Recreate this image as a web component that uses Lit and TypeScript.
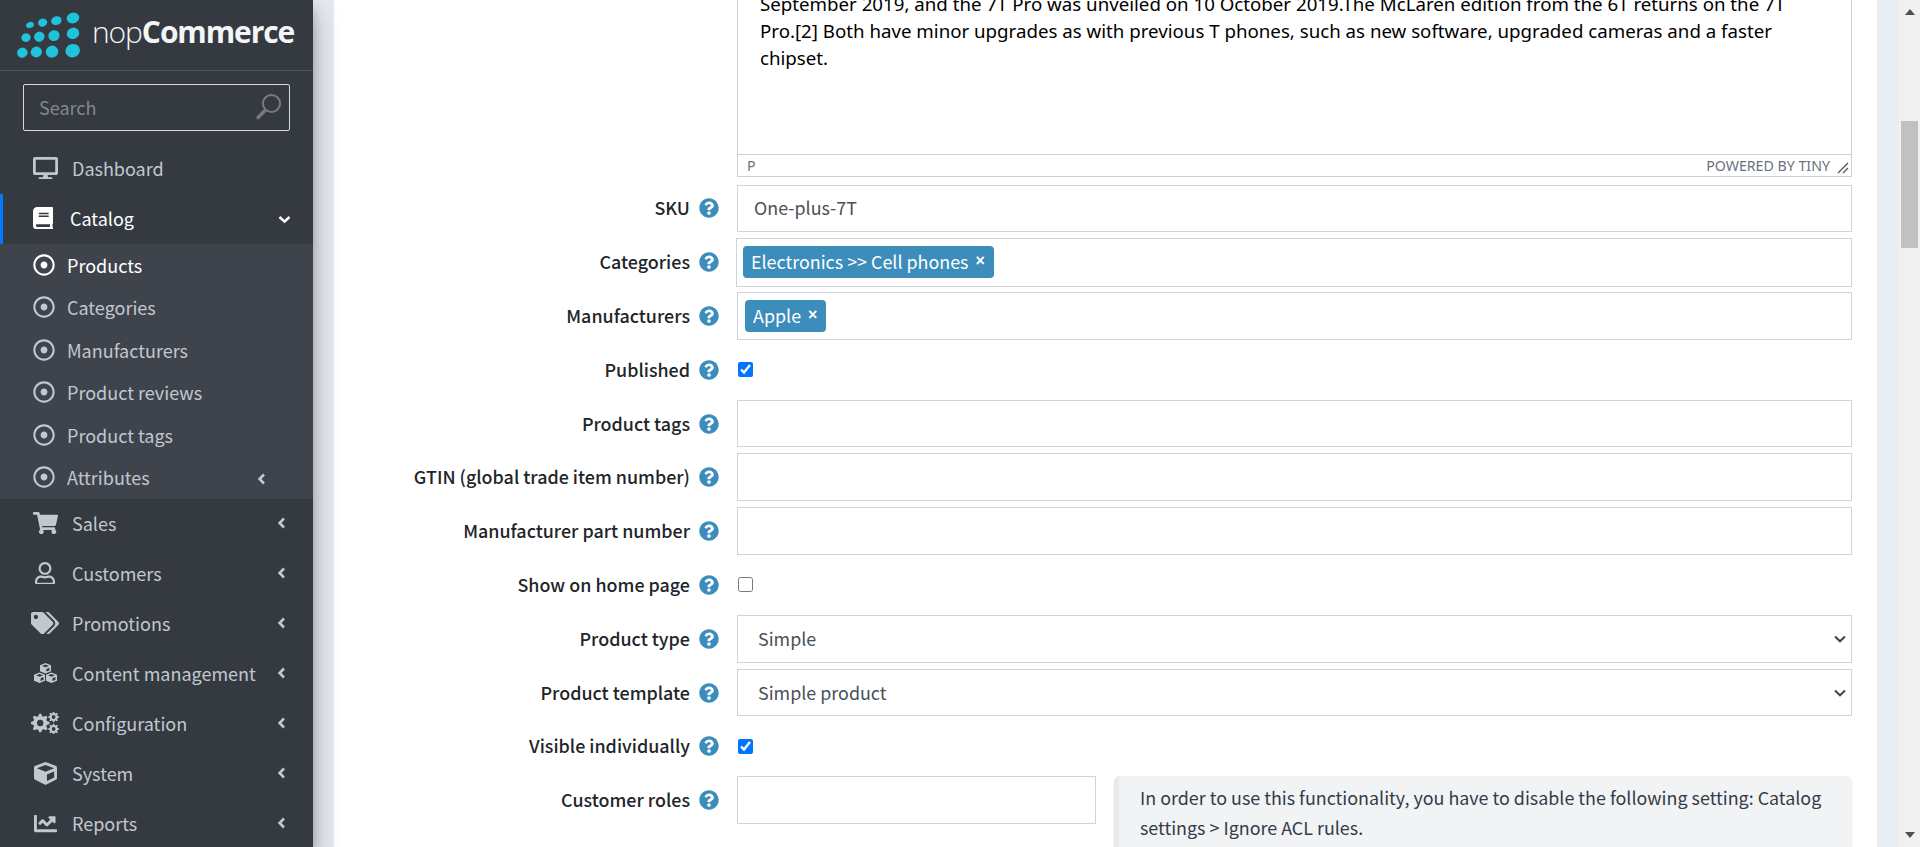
import { LitElement, html, css, svg } from "lit";
import { customElement } from "lit/decorators.js";

const P = {
  desktop: ["0 0 576 512", "M528 0H48C21.5 0 0 21.5 0 48v320c0 26.5 21.5 48 48 48h192l-16 48h-72c-13.3 0-24 10.7-24 24s10.7 24 24 24h272c13.3 0 24-10.7 24-24s-10.7-24-24-24h-72l-16-48h192c26.5 0 48-21.5 48-48V48c0-26.5-21.5-48-48-48zm-16 352H64V64h448v288z"],
  book: ["0 0 448 512", "M448 360V24c0-13.3-10.7-24-24-24H96C43 0 0 43 0 96v320c0 53 43 96 96 96h328c13.3 0 24-10.7 24-24v-16c0-7.5-3.5-14.3-8.9-18.7-4.2-15.4-4.2-59.3 0-74.7 5.4-4.3 8.9-11.1 8.9-18.6zM128 134c0-3.3 2.7-6 6-6h212c3.3 0 6 2.7 6 6v20c0 3.3-2.7 6-6 6H134c-3.3 0-6-2.7-6-6v-20zm0 64c0-3.3 2.7-6 6-6h212c3.3 0 6 2.7 6 6v20c0 3.3-2.7 6-6 6H134c-3.3 0-6-2.7-6-6v-20zm253.4 250H96c-17.7 0-32-14.3-32-32 0-17.6 14.4-32 32-32h285.4c-1.9 17.1-1.9 46.9 0 64z"],
  cart: ["0 0 576 512", "M528.12 301.319l47.273-208C578.806 78.301 567.391 64 551.99 64H159.208l-9.166-44.81C147.758 8.021 137.93 0 126.529 0H24C10.745 0 0 10.745 0 24v16c0 13.255 10.745 24 24 24h69.883l70.248 343.435C147.325 417.1 136 435.222 136 456c0 30.928 25.072 56 56 56s56-25.072 56-56c0-15.674-6.447-29.835-16.824-40h209.647C430.447 426.165 424 440.326 424 456c0 30.928 25.072 56 56 56s56-25.072 56-56c0-22.172-12.888-41.332-31.579-50.405l5.517-24.276c3.413-15.018-8.002-29.319-23.403-29.319H218.117l-6.545-32h293.145c11.206 0 20.92-7.754 23.403-18.681z"],
  user: ["0 0 448 512", "M313.6 304c-28.7 0-42.5 16-89.6 16-47.1 0-60.8-16-89.6-16C60.2 304 0 364.2 0 438.4V464c0 26.5 21.5 48 48 48h352c26.5 0 48-21.5 48-48v-25.6c0-74.2-60.2-134.4-134.4-134.4zM400 464H48v-25.6c0-47.6 38.8-86.4 86.4-86.4 14.6 0 38.3 16 89.6 16 51.7 0 74.9-16 89.6-16 47.6 0 86.4 38.8 86.4 86.4V464zM224 288c79.5 0 144-64.5 144-144S303.5 0 224 0 80 64.5 80 144s64.5 144 144 144zm0-240c52.9 0 96 43.1 96 96s-43.1 96-96 96-96-43.1-96-96 43.1-96 96-96z"],
  tags: ["0 0 640 512", "M497.941 225.941L286.059 14.059A48 48 0 0 0 252.118 0H48C21.49 0 0 21.49 0 48v204.118a48 48 0 0 0 14.059 33.941l211.882 211.882c18.744 18.745 49.136 18.746 67.882 0l204.118-204.118c18.745-18.745 18.745-49.137 0-67.882zM112 160c-26.51 0-48-21.49-48-48s21.49-48 48-48 48 21.49 48 48-21.49 48-48 48zm513.941 133.823L421.823 497.941c-18.745 18.745-49.137 18.745-67.882 0l-.36-.36L527.64 323.522c16.999-16.999 26.36-39.6 26.36-63.64s-9.362-46.641-26.36-63.64L331.397 0h48.721a48 48 0 0 1 33.941 14.059l211.882 211.882c18.745 18.745 18.745 49.137 0 67.882z"],
  cube: ["0 0 512 512", "M239.1 6.3l-208 78c-18.7 7-31.1 25-31.1 45v225.1c0 18.2 10.3 34.8 26.5 42.9l208 104c13.5 6.8 29.4 6.8 42.9 0l208-104c16.3-8.1 26.5-24.8 26.5-42.9V129.3c0-20-12.4-37.9-31.1-44.9l-208-78C262 2.2 250 2.2 239.1 6.3zM256 68.4l192 72v1.1l-192 78-192-78v-1.1l192-72zm32 356V275.5l160-65v133.9l-160 80z"],
  chart: ["0 0 512 512", "M496 384H64V80c0-8.84-7.16-16-16-16H16C7.16 64 0 71.16 0 80v336c0 17.67 14.33 32 32 32h464c8.84 0 16-7.16 16-16v-32c0-8.84-7.16-16-16-16zM464 96H345.94c-21.38 0-32.09 25.85-16.97 40.97l32.4 32.4L288 242.75l-73.37-73.37c-12.5-12.5-32.76-12.5-45.25 0l-68.69 68.69c-6.25 6.25-6.25 16.38 0 22.63l22.62 22.62c6.25 6.25 16.38 6.25 22.63 0L192 237.25l73.37 73.37c12.5 12.5 32.76 12.5 45.25 0l96-96 32.4 32.4c15.12 15.12 40.97 4.41 40.97-16.97V112c.01-8.84-7.15-16-15.99-16z"],
  help: ["0 0 512 512", "M504 256c0 136.997-111.043 248-248 248S8 392.997 8 256C8 119.083 119.043 8 256 8s248 111.083 248 248zM262.655 90c-54.497 0-89.255 22.957-116.549 63.758-3.536 5.286-2.353 12.415 2.715 16.258l34.699 26.31c5.205 3.947 12.621 3.008 16.665-2.122 17.864-22.658 30.113-35.797 57.303-35.797 20.429 0 45.698 13.148 45.698 32.958 0 14.976-12.363 22.667-32.534 33.976C247.128 238.528 216 254.941 216 296v4c0 6.627 5.373 12 12 12h56c6.627 0 12-5.373 12-12v-1.333c0-28.462 83.186-29.647 83.186-106.667 0-58.002-60.165-102-116.531-102zM256 338c-25.365 0-46 20.635-46 46 0 25.364 20.635 46 46 46s46-20.636 46-46c0-25.365-20.635-46-46-46z"],
  dot: ["0 0 512 512", "M256 56c110.532 0 200 89.451 200 200 0 110.532-89.451 200-200 200-110.532 0-200-89.451-200-200 0-110.532 89.451-200 200-200m0-48C119.033 8 8 119.033 8 256s111.033 248 248 248 248-111.033 248-248S392.967 8 256 8zm0 168c-44.183 0-80 35.817-80 80s35.817 80 80 80 80-35.817 80-80-35.817-80-80-80z"],
};
type IconName = keyof typeof P;

function gearPath(cx: number, cy: number, r: number, hole: number, teeth: number) {
  const pts: string[] = [];
  const n = teeth * 4;
  for (let i = 0; i < n; i++) {
    const a = (i / n) * Math.PI * 2 - Math.PI / teeth / 4;
    const rr = i % 4 < 2 ? r : r * 0.74;
    pts.push(`${(cx + rr * Math.cos(a)).toFixed(2)} ${(cy + rr * Math.sin(a)).toFixed(2)}`);
  }
  return `M${pts.join("L")}Z M${cx + hole} ${cy}a${hole} ${hole} 0 1 0 ${-2 * hole} 0a${hole} ${hole} 0 1 0 ${2 * hole} 0Z`;
}

const icon = (name: IconName, w: number) => html`<svg class="fa" width=${w} viewBox=${P[name][0]} fill="currentColor"><path fill-rule="evenodd" d=${P[name][1]}></path></svg>`;

const cogs = (w: number) => html`<svg class="fa" width=${w} viewBox="0 0 28 22" fill="currentColor">
  <path fill-rule="evenodd" d=${gearPath(9.2, 11, 9.4, 3.2, 8)}></path>
  <path fill-rule="evenodd" d=${gearPath(22.6, 5, 5.4, 1.9, 8)}></path>
  <path fill-rule="evenodd" d=${gearPath(22.6, 17, 5.4, 1.9, 8)}></path>
</svg>`;

const cubes = (w: number) => html`<svg class="fa" width=${w} viewBox="0 0 23 20" fill="currentColor">
  <path fill-rule="evenodd" d="M11.5 0 17 2.2v6l-5.5 2.2L6 8.2v-6zM8 2.9l3.5 1.4L15 2.9l-3.5-1.3zM12.4 5.9v2.7l3-1.2V4.7z"></path>
  <path fill-rule="evenodd" d="M5.6 9.6 11 11.7v6L5.6 19.9 0 17.7v-6zM2.2 12.3l3.4 1.4L9 12.3 5.6 11zM6.6 15.3V18l2.9-1.2v-2.7z"></path>
  <path fill-rule="evenodd" d="M17.4 9.6 23 11.7v6l-5.6 2.2-5.4-2.2v-6zM14 12.3l3.4 1.4 3.4-1.4-3.4-1.3zM18.4 15.3V18l3.1-1.2v-2.7z"></path>
</svg>`;

const chevL = html`<svg class="chev" width="9" height="12" viewBox="0 0 9 12" fill="none" stroke="currentColor" stroke-width="2.6"><path d="M7 1.5 2.6 6 7 10.5"></path></svg>`;
const chevD = html`<svg class="chev" width="13" height="9" viewBox="0 0 13 9" fill="none" stroke="currentColor" stroke-width="2.6"><path d="M1.5 2 6.5 6.6 11.5 2"></path></svg>`;

const DOTS: [number, number, number, number][] = [
  [48, 42, 12, 9], [86, 35, 14, 12], [127, 29, 16, 13], [177, 21, 19, 16],
  [36, 80, 14, 13], [76, 77, 16, 15], [120, 74, 17, 16], [177, 67, 19, 17],
  [25, 125, 16, 15], [67, 123, 17, 16], [114, 122, 19, 18], [176, 119, 22, 20],
];
const logoMark = html`<svg class="mark" width="72" height="56" viewBox="0 0 216 168" fill="#1fc3dc">
  ${DOTS.map(([x, y, rx, ry]) => svg`<ellipse cx=${x} cy=${y} rx=${rx} ry=${ry} transform="rotate(-18 ${x} ${y})"></ellipse>`)}
</svg>`;

const TOP: [string, any][] = [
  ["Sales", icon("cart", 25)],
  ["Customers", icon("user", 20)],
  ["Promotions", icon("tags", 28)],
  ["Content management", cubes(23)],
  ["Configuration", cogs(28)],
  ["System", icon("cube", 23)],
  ["Reports", icon("chart", 23)],
];
const SUB = ["Products", "Categories", "Manufacturers", "Product reviews", "Product tags", "Attributes"];

@customElement("app-root")
export class AppRoot extends LitElement {
  static styles = css`
    :host { display: flex; width: 1920px; height: 847px; overflow: hidden; background: #e9edf4;
      font-family: "Noto Sans CJK SC", "Source Sans Pro", "Noto Sans", sans-serif; font-size: 17.9px; color: #212529; }
    * { box-sizing: border-box; }
    .fa { display: block; flex: none; }
    .chev { display: block; flex: none; }

    aside { width: 313px; flex: none; background: #343a40; color: #c2c7d0; position: relative; z-index: 2;
      box-shadow: 0 14px 28px rgba(0,0,0,.25), 0 10px 10px rgba(0,0,0,.22); font-size: 18px; }
    .brand { height: 71px; border-bottom: 1px solid #4b545c; display: flex; align-items: center; padding: 0 0 0 14px; gap: 6px; }
    .mark { margin-top: 7px; flex: none; }
    .logo { font-family: "Open Sans", sans-serif; font-size: 30px; line-height: 40px; color: #f4f5f6; font-weight: 300; letter-spacing: -1.1px; white-space: nowrap; margin-top: -6px; }
    .logo b { font-weight: 700; }
    .search { height: 73px; padding: 13px 23px; }
    .search-box { height: 47px; border: 1px solid #d8dbde; border-radius: 2px; display: flex; align-items: center; justify-content: space-between; padding: 0 7px 2px 15px; }
    .search-box span { color: #83888d; font-size: 18px; }
    .search-box svg { display: block; }

    .item { height: 50px; display: flex; align-items: center; position: relative; white-space: nowrap; padding-bottom: 2px; }
    .ic { width: 26px; margin-left: 32px; margin-right: 14px; display: flex; justify-content: center; flex: none; }
    .item .chev { position: absolute; right: 27px; top: 18px; }
    .item.open { color: #fff; border-left: 3px solid #007bff; }
    .item.open .ic { width: 20px; margin-left: 30px; margin-right: 17px; }
    .item.open .chev { right: 22px; top: 21px; }
    .sub { background: #3f444c; height: 255px; }
    .sub div { height: 42.5px; display: flex; align-items: center; padding: 0 0 1px 33px; gap: 12px; position: relative; }
    .sub div.on { color: #fff; }
    .sub .chev { position: absolute; right: 47px; top: 16px; }

    .gut-l { width: 21px; flex: none; background: #e6e9ef; }
    main { width: 1543px; flex: none; background: #fff; height: 847px; overflow: hidden; padding-right: 25px; }
    .gut-r { width: 22px; flex: none; background: #e9edf4; }
    .bar { width: 21px; flex: none; background: #f1f1f1; display: flex; flex-direction: column; align-items: center; padding: 9px 0 9px; }
    .thumb { width: 17px; height: 127px; background: #c1c1c1; margin-top: 106px; }
    .bar svg { display: block; flex: none; }
    .bar .dn { margin-top: auto; }

    .row { display: grid; grid-template-columns: 403px 1fr; min-height: 47.8px; margin-bottom: 6px; align-items: center; }
    .row.top { align-items: start; }
    .label { display: flex; justify-content: flex-end; align-items: center; gap: 9px; padding-right: 18px; font-weight: 500; white-space: nowrap; color: #212529; line-height: 24px; }
    .label span { margin-top: -2px; }
    .row.top .label { height: 47.8px; }
    .label .fa { color: #3c8dbc; }

    .editor-row { display: grid; grid-template-columns: 403px 1fr; margin-bottom: 7.5px; }
    .editor { grid-column: 2; height: 177px; border: solid #ccd0d6; border-width: 0 1px 1px 1px; display: flex; flex-direction: column; overflow: hidden; }
    .doc { flex: 1; padding-left: 22px; overflow: hidden; color: #000; font-family: "Noto Sans", "Open Sans", sans-serif; font-size: 18.7px; line-height: 27px; white-space: nowrap; }
    .doc p { margin: -10.5px 0 0; }
    .status { height: 22px; flex: none; border-top: 1px solid #ccd0d6; display: flex; align-items: center; justify-content: space-between; color: #6a7280; padding: 0 2px 0 9px; font-family: "Noto Sans", "Open Sans", sans-serif; font-size: 14.2px; }
    .status div { display: flex; align-items: center; gap: 7px; }
    .status svg { display: block; margin-top: 4px; }

    .ctl { border: 1px solid #ced4da; height: 47.8px; display: flex; align-items: center; padding: 0 16px 2px; color: #495057; line-height: 24px; background: #fff; width: 100%; font: inherit; border-radius: 0; }
    .tags { height: 49px; margin: -1px 0 -1px -1px; width: calc(100% + 1px); padding: 0 6px; }
    .tags2 { height: 48px; margin: -1px 0; padding: 0 7px; }
    .tag { background: #3c8dbc; color: #fff; height: 32px; border-radius: 4px; display: flex; align-items: center; padding: 0 9px 2px 8px; white-space: nowrap; gap: 7px; }
    .tag b { font-family: "Liberation Sans", sans-serif; font-weight: 700; font-size: 16px; }
    .sel-wrap { position: relative; }
    select.ctl { appearance: none; -webkit-appearance: none; padding: 0 0 2px 20px; outline: 0; font-family: inherit; font-size: 17.9px; color: #495057; }
    .sel-wrap svg { position: absolute; right: 6px; top: 20px; display: block; }
    input[type="checkbox"] { width: 15px; height: 15px; margin: 0 0 0 1px; display: block; accent-color: #0075ff; }
    .roles { display: flex; gap: 18px; align-items: flex-start; }
    .roles .ctl { width: 359px; flex: none; }
    .info { flex: 1; background: #f2f3f5; border-left: 5px solid #e7e9ec; border-radius: 6px; padding: 6px 16px 8px 21px; color: #333c47; line-height: 30px; box-shadow: 0 1px 2px rgba(0,0,0,.12); }
  `;

  private row(label: string, body: unknown) {
    return html`<div class="row"><div class="label"><span>${label}</span>${icon("help", 20)}</div>${body}</div>`;
  }

  private select(v: string) {
    return html`<div class="sel-wrap"><select class="ctl"><option>${v}</option></select>
      <svg width="12" height="8" viewBox="0 0 12 8" fill="none" stroke="#444" stroke-width="2"><path d="M1 1.5 6 6.3l5-4.8"></path></svg></div>`;
  }

  render() {
    return html`
      <aside>
        <div class="brand">${logoMark}<div class="logo">nop<b>Commerce</b></div></div>
        <div class="search"><div class="search-box"><span>Search</span>
          <svg width="27" height="27" viewBox="0 0 27 27" fill="none" stroke="#777b80"><circle cx="16.5" cy="10.5" r="8.6" stroke-width="2"></circle><path d="M3 24.5 10 17.5" stroke-width="3.4" stroke-linecap="round"></path></svg>
        </div></div>
        <div class="item"><span class="ic">${icon("desktop", 25)}</span>Dashboard</div>
        <div class="item open"><span class="ic">${icon("book", 20)}</span>Catalog${chevD}</div>
        <div class="sub">
          ${SUB.map((s, i) => html`<div class=${i === 0 ? "on" : ""}>${icon("dot", 22)}<span>${s}</span>${s === "Attributes" ? chevL : ""}</div>`)}
        </div>
        ${TOP.map(([t, ic]) => html`<div class="item"><span class="ic">${ic}</span>${t}${chevL}</div>`)}
      </aside>
      <div class="gut-l"></div>
      <main>
        <div class="editor-row"><div class="editor">
          <div class="doc"><p>September 2019, and the 7T Pro was unveiled on 10 October 2019.The McLaren edition from the 6T returns on the 7T<br>Pro.[2] Both have minor upgrades as with previous T phones, such as new software, upgraded cameras and a faster<br>chipset.</p></div>
          <div class="status"><span>P</span><div><span>POWERED BY TINY</span>
            <svg width="12" height="12" viewBox="0 0 12 12" fill="none" stroke="#555" stroke-width="1.3"><path d="M1 11 11 1M6 11l5-5"></path></svg></div></div>
        </div></div>
        ${this.row("SKU", html`<div class="ctl">One-plus-7T</div>`)}
        ${this.row("Categories", html`<div class="ctl tags"><span class="tag">Electronics &gt;&gt; Cell phones <b>×</b></span></div>`)}
        ${this.row("Manufacturers", html`<div class="ctl tags2"><span class="tag">Apple <b>×</b></span></div>`)}
        ${this.row("Published", html`<input type="checkbox" checked />`)}
        ${this.row("Product tags", html`<div class="ctl"></div>`)}
        ${this.row("GTIN (global trade item number)", html`<div class="ctl"></div>`)}
        ${this.row("Manufacturer part number", html`<div class="ctl"></div>`)}
        ${this.row("Show on home page", html`<input type="checkbox" />`)}
        ${this.row("Product type", this.select("Simple"))}
        ${this.row("Product template", this.select("Simple product"))}
        ${this.row("Visible individually", html`<input type="checkbox" checked />`)}
        <div class="row top"><div class="label"><span>Customer roles</span>${icon("help", 20)}</div>
          <div class="roles"><div class="ctl"></div><div class="info">In order to use this functionality, you have to disable the following setting: Catalog settings &gt; Ignore ACL rules.</div></div></div>
      </main>
      <div class="gut-r"></div>
      <div class="bar">
        <svg width="10" height="6" viewBox="0 0 10 6" fill="#505050"><path d="M5 0 10 6H0z"></path></svg>
        <div class="thumb"></div>
        <svg class="dn" width="10" height="6" viewBox="0 0 10 6" fill="#505050"><path d="M5 6 10 0H0z"></path></svg>
      </div>
    `;
  }
}
